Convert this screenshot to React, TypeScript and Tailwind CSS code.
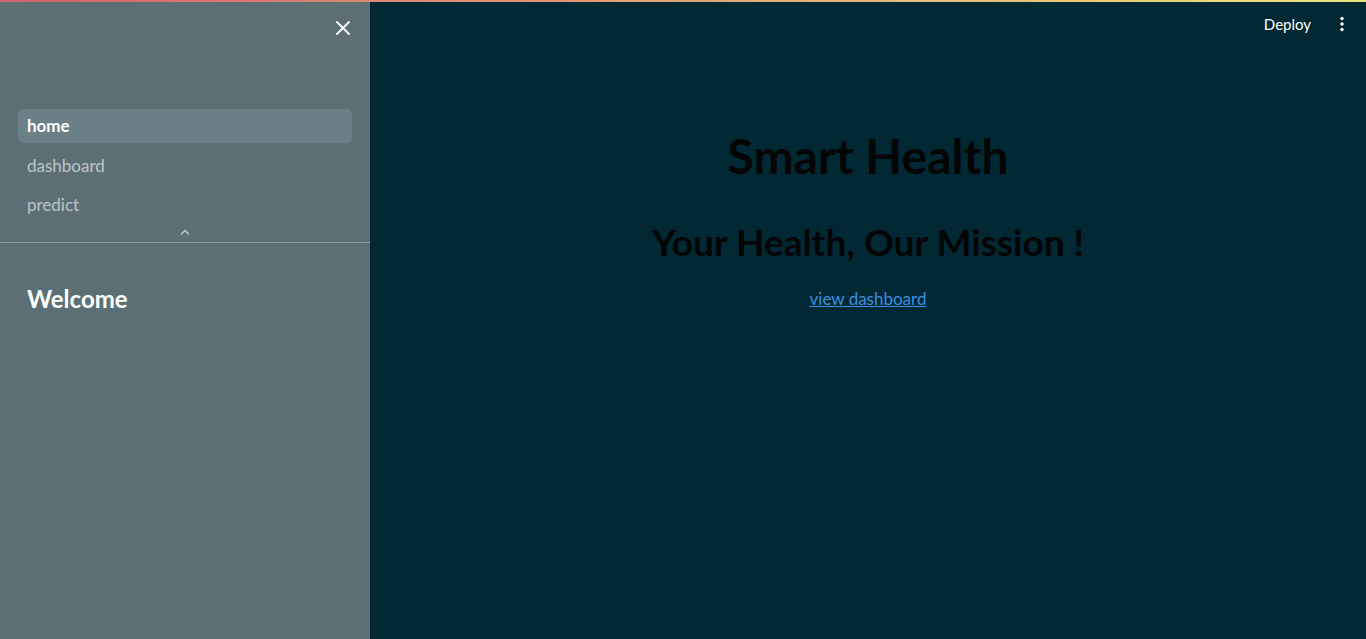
import React from "react";

export default function App() {
  const font = { fontFamily: '"Lato", "Noto Sans", sans-serif' };
  return (
    <div className="relative flex h-[639px] w-full overflow-hidden" style={font}>
      <div className="absolute left-0 right-0 top-0 z-10 h-[2px] bg-gradient-to-r from-[#d0636b] to-[#e9e57e]" />
      {/* Sidebar */}
      <aside className="flex w-[370px] shrink-0 flex-col bg-[#5b6f75]">
        <div className="flex h-[56px] items-center justify-end pr-[19px]">
          <svg width="16" height="16" viewBox="0 0 16 16" className="text-white">
            <path d="M2 2 L14 14 M14 2 L2 14" stroke="currentColor" strokeWidth="1.8" strokeLinecap="round" />
          </svg>
        </div>
        <nav className="mt-[53px] flex flex-col gap-[5px] px-[18px]">
          <div className="flex h-[34px] items-center rounded-[5px] bg-[#6b7f86] px-[9px] text-[17px] font-bold text-white">
            home
          </div>
          <div className="flex h-[34px] items-center px-[9px] pt-[2px] text-[17px] text-[#bcc6c8]">dashboard</div>
          <div className="flex h-[34px] items-center px-[9px] pt-[2px] text-[17px] text-[#bcc6c8]">predict</div>
        </nav>
        <div className="flex h-[21px] items-center justify-center">
          <svg width="10" height="6" viewBox="0 0 10 6" className="text-[#c3ccce]">
            <path d="M1.5 5 L5 1.5 L8.5 5" stroke="currentColor" strokeWidth="1.4" fill="none" strokeLinecap="round" />
          </svg>
        </div>
        <div className="h-px bg-[#8c9da1]" />
        <div className="px-[27px] pt-[40px]">
          <h2 className="text-[24px] font-bold leading-[32px] text-white">Welcome</h2>
        </div>
      </aside>
      {/* Main */}
      <main className="relative flex flex-1 flex-col bg-[#022834]">
        <header className="flex h-[50px] items-center justify-end gap-[29px] pb-[2px] pr-[22px]">
          <span className="text-[15px] text-white">Deploy</span>
          <svg width="4" height="16" viewBox="0 0 4 16" className="text-white">
            <circle cx="2" cy="2.5" r="1.7" fill="currentColor" />
            <circle cx="2" cy="8" r="1.7" fill="currentColor" />
            <circle cx="2" cy="13.5" r="1.7" fill="currentColor" />
          </svg>
        </header>
        <div className="flex flex-col items-center">
          <h1 className="mt-[76px] text-[48px] font-bold leading-[60px] text-[#050505]">Smart Health</h1>
          <h2 className="mt-[33px] text-[37px] font-bold leading-[46px] text-[#050505]">Your Health, Our Mission !</h2>
          <a href="#" className="mt-[22px] text-[17px] leading-[24px] text-[#3a8fe0] underline">view dashboard</a>
        </div>
      </main>
    </div>
  );
}
